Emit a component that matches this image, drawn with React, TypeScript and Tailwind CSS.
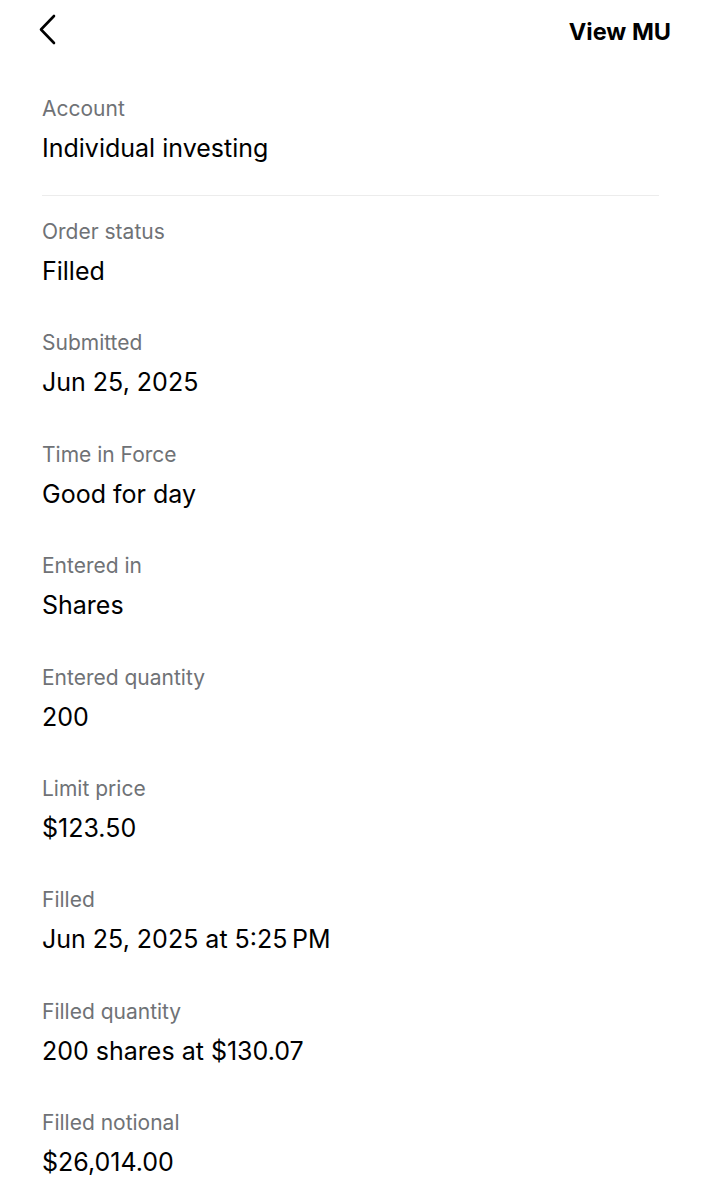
const rows = [
  { label: "Order status", value: "Filled" },
  { label: "Submitted", value: "Jun 25, 2025" },
  { label: "Time in Force", value: "Good for day" },
  { label: "Entered in", value: "Shares" },
  { label: "Entered quantity", value: "200" },
  { label: "Limit price", value: "$123.50" },
  { label: "Filled", value: "Jun 25, 2025 at 5:25\u2009PM" },
  { label: "Filled quantity", value: "200 shares at $130.07" },
  { label: "Filled notional", value: "$26,014.00" },
];

function Field({ label, value }: { label: string; value: string }) {
  return (
    <div className="flex flex-col gap-[9px]">
      <div className="text-[21px] leading-[28px] text-[#6f7276]">{label}</div>
      <div className="text-[25px] leading-[32px] text-black">{value}</div>
    </div>
  );
}

export default function App() {
  return (
    <div className="w-[701px] h-[1200px] bg-white overflow-hidden font-['Inter',sans-serif]">
      {/* Top bar */}
      <div className="flex items-center justify-between h-[60px] pl-[36px] pr-[30px]">
        <svg width="24" height="32" viewBox="0 0 24 32" fill="none">
          <path d="M18 2 L5 15.5 L18 29" stroke="black" strokeWidth="2.6" strokeLinecap="round" strokeLinejoin="round" />
        </svg>
        <span className="pt-[3px] text-[23.5px] font-bold text-black">View MU</span>
      </div>

      <div className="px-[42px] pt-[35px]">
        <Field label="Account" value="Individual investing" />
        <div className="mt-[31px] mb-[22px] border-t border-[#ececec]" />
        <div className="flex flex-col gap-[42.4px]">
          {rows.map((r) => (
            <Field key={r.label} label={r.label} value={r.value} />
          ))}
        </div>
      </div>
    </div>
  );
}
